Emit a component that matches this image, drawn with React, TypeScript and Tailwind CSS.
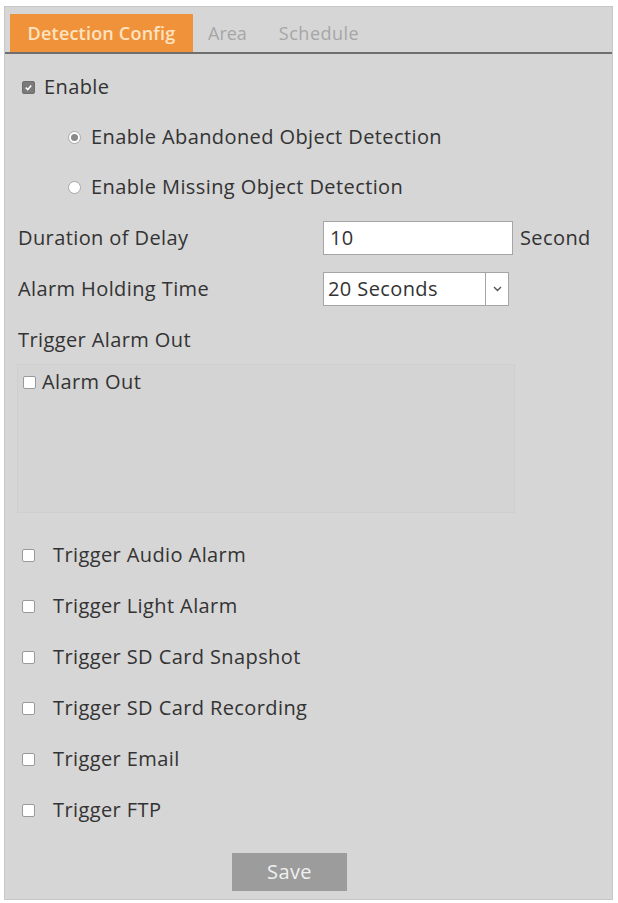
import React from "react";

const Box = ({ checked = false }: { checked?: boolean }) => (
  <span
    className={
      "inline-flex items-center justify-center w-[13px] h-[13px] rounded-[2px] border shrink-0 " +
      (checked ? "bg-[#7a7a7a] border-[#6e6e6e]" : "bg-white border-[#9a9a9a]")
    }
  >
    {checked && (
      <svg width="9" height="9" viewBox="0 0 10 10">
        <path d="M2 5.2 L4.2 7.4 L8 2.8" stroke="#ffffff" strokeWidth="1.8" fill="none" />
      </svg>
    )}
  </span>
);

const Radio = ({ checked = false }: { checked?: boolean }) => (
  <span className="inline-flex items-center justify-center w-[13px] h-[13px] rounded-full border border-[#a8a8a8] bg-white shrink-0">
    {checked && <span className="w-[7px] h-[7px] rounded-full bg-[#8a8a8a]" />}
  </span>
);

export default function App() {
  const triggers = [
    "Trigger Audio Alarm",
    "Trigger Light Alarm",
    "Trigger SD Card Snapshot",
    "Trigger SD Card Recording",
    "Trigger Email",
    "Trigger FTP",
  ];
  return (
    <div
      className="w-[618px] h-[903px] bg-white pt-[6px] pl-[4px] pr-[5px] pb-[3px] text-[#333333]"
      style={{ fontFamily: '"Open Sans", "Noto Sans", sans-serif' }}
    >
      <div className="h-full bg-[#d6d6d6] border border-[#c8c8c8] flex flex-col">
        {/* tabs */}
        <div className="h-[47px] flex items-end pl-[5px] border-b-2 border-[#6f6f6f]">
          <div className="h-[38px] w-[183px] bg-[#f0923a] flex items-center justify-center text-[18px] tracking-[0.2px] text-[#fde3c0] font-semibold">
            Detection Config
          </div>
          <div className="h-[38px] flex items-center pl-[15px] text-[18px] text-[#a6a6a6]">Area</div>
          <div className="h-[38px] flex items-center pl-[32px] text-[18px] tracking-[0.5px] text-[#a6a6a6]">Schedule</div>
        </div>

        <div className="text-[20px] tracking-[0.4px] leading-none">
          <div className="flex items-center gap-[9px] pl-[17px] mt-[26px] h-[14px]">
            <Box checked />
            <span>Enable</span>
          </div>
          <div className="flex items-center gap-[10px] pl-[63px] mt-[36px] h-[14px]">
            <Radio checked />
            <span>Enable Abandoned Object Detection</span>
          </div>
          <div className="flex items-center gap-[10px] pl-[63px] mt-[36px] h-[14px]">
            <Radio />
            <span>Enable Missing Object Detection</span>
          </div>

          <div className="flex items-center pl-[13px] mt-[27px] h-[34px]">
            <span className="w-[305px]">Duration of Delay</span>
            <div className="w-[190px] h-[34px] bg-white border border-[#a5a5a5] flex items-center pl-[6px]">10</div>
            <span className="ml-[7px]">Second</span>
          </div>

          <div className="flex items-center pl-[13px] mt-[17px] h-[34px]">
            <span className="w-[305px]">Alarm Holding Time</span>
            <div className="w-[186px] h-[34px] bg-white border border-[#a5a5a5] flex items-center">
              <span className="flex-1 pl-[4px]">20 Seconds</span>
              <span className="w-[23px] h-full border-l border-[#a5a5a5] flex items-center justify-center">
                <svg width="9" height="6" viewBox="0 0 9 6">
                  <path d="M1 1 L4.5 4.5 L8 1" stroke="#555" strokeWidth="1.4" fill="none" />
                </svg>
              </span>
            </div>
          </div>

          <div className="pl-[13px] mt-[25px] h-[17px] flex items-center">Trigger Alarm Out</div>

          <div className="ml-[12px] mt-[16px] w-[498px] h-[149px] border border-[#cfcfcf] bg-[#d4d4d4] pt-[10px] pl-[5px]">
            <div className="flex items-center gap-[6px] h-[14px]">
              <Box />
              <span>Alarm Out</span>
            </div>
          </div>

          <div className="flex flex-col gap-[37px] mt-[35px]">
            {triggers.map((t) => (
              <div key={t} className="flex items-center gap-[18px] pl-[17px] h-[14px]">
                <Box />
                <span>{t}</span>
              </div>
            ))}
          </div>

          <div className="flex justify-center mt-[36px] pr-[38px]">
            <div className="w-[115px] h-[38px] bg-[#9c9c9c] text-[#f0f0f0] text-[20px] flex items-center justify-center">
              Save
            </div>
          </div>
        </div>
      </div>
    </div>
  );
}
